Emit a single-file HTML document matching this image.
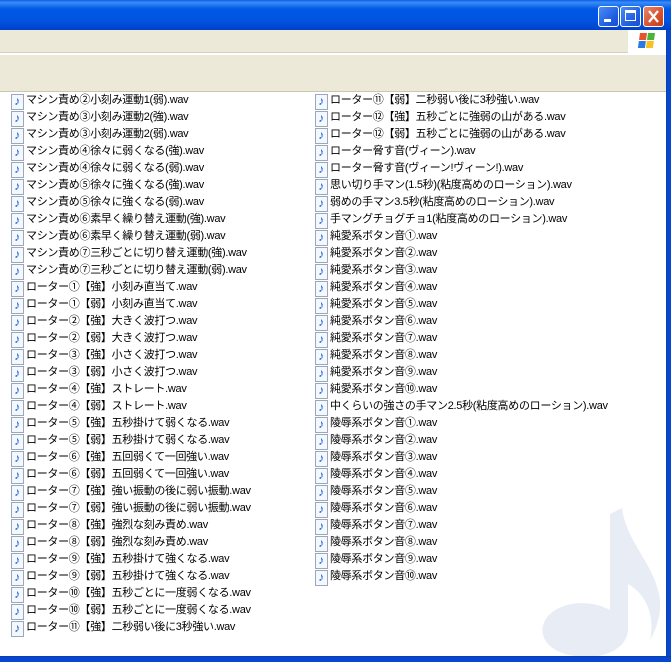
<!DOCTYPE html>
<html><head><meta charset="utf-8"><style>
*{margin:0;padding:0;box-sizing:border-box}
body{width:671px;height:662px;overflow:hidden;background:#fff;position:relative;font-family:"Liberation Sans","Noto Sans CJK JP",sans-serif;font-size:11px;color:#000}
#title{position:absolute;left:0;top:0;width:671px;height:30px;background:linear-gradient(#0a5fe8 0%,#3a8cf6 8%,#0058e6 30%,#0053e0 70%,#0040c8 100%)}
.btn{position:absolute;top:6px;width:21px;height:21px;border:1px solid #fff;border-radius:3px;background:linear-gradient(135deg,#4a8cf8,#1c5ae0 70%,#1b4fc9)}
#close{background:linear-gradient(135deg,#e8866a,#d6512e 60%,#c53c1c)}
#menu{position:absolute;left:0;top:30px;width:666px;height:23px;background:#ece9d8;border-bottom:1px solid #d6d2c2}
#logo{position:absolute;left:628px;top:30px;width:38px;height:23px;background:#fff}
#tool{position:absolute;left:0;top:54px;width:666px;height:38px;background:#ece9d8;border-top:1px solid #fff;border-bottom:1px solid #c9c6b6}
#rb{position:absolute;left:666px;top:30px;width:5px;height:632px;background:#0848d0;border-left:1px solid #0a3fb0}
#bb{position:absolute;left:0;top:656px;width:671px;height:6px;background:#0848d0;border-top:1px solid #0a3fb0}
.col{position:absolute;top:92px}
.r{height:17px;line-height:17px;white-space:nowrap;position:relative;padding-left:15px;letter-spacing:-0.3px}
.r:before{content:"";position:absolute;left:0;top:2px;width:11px;height:14px;background:#f4f7fc;border:1px solid #9aa8bc}
.r:after{content:"♪";position:absolute;left:1px;top:1px;width:10px;text-align:center;font-size:12px;font-weight:bold;color:#1a5fd0;line-height:16px}
</style></head><body>
<div id="title"></div>
<div class="btn" style="left:598px"><div style="position:absolute;left:5px;top:12px;width:7px;height:3px;background:#fff"></div></div>
<div class="btn" style="left:620px"><div style="position:absolute;left:4px;top:3px;width:11px;height:11px;border:1px solid #fff;border-top:3px solid #fff"></div></div>
<div class="btn" id="close" style="left:643px"><svg width="19" height="19" style="position:absolute;left:0;top:0"><path d="M5 4L14 15M14 4L5 15" stroke="#fff" stroke-width="2.2"/></svg></div>
<div id="menu"></div>
<div id="logo"><svg width="38" height="23"><g transform="translate(12,3) skewX(-8)"><rect x="0" y="0" width="7" height="7" fill="#e8542a"/><rect x="8" y="0" width="7" height="7" fill="#4ab33a"/><rect x="0" y="8" width="7" height="7" fill="#2a7ae0"/><rect x="8" y="8" width="7" height="7" fill="#f8c020"/></g></svg></div>
<div id="tool"></div>
<svg style="position:absolute;left:530px;top:500px" width="136" height="156"><path d="M92 8 C96 40 120 60 128 90 C134 110 126 130 120 140 C126 110 112 92 98 84 L98 128 C98 150 72 160 45 156 C15 152 5 132 18 116 C33 100 62 100 80 110 L80 14 Z" fill="#e8ecf4"/></svg>
<div class="col" style="left:11px">
<div class="r">マシン責め②小刻み運動1(弱).wav</div>
<div class="r">マシン責め③小刻み運動2(強).wav</div>
<div class="r">マシン責め③小刻み運動2(弱).wav</div>
<div class="r">マシン責め④徐々に弱くなる(強).wav</div>
<div class="r">マシン責め④徐々に弱くなる(弱).wav</div>
<div class="r">マシン責め⑤徐々に強くなる(強).wav</div>
<div class="r">マシン責め⑤徐々に強くなる(弱).wav</div>
<div class="r">マシン責め⑥素早く繰り替え運動(強).wav</div>
<div class="r">マシン責め⑥素早く繰り替え運動(弱).wav</div>
<div class="r">マシン責め⑦三秒ごとに切り替え運動(強).wav</div>
<div class="r">マシン責め⑦三秒ごとに切り替え運動(弱).wav</div>
<div class="r">ローター①【強】小刻み直当て.wav</div>
<div class="r">ローター①【弱】小刻み直当て.wav</div>
<div class="r">ローター②【強】大きく波打つ.wav</div>
<div class="r">ローター②【弱】大きく波打つ.wav</div>
<div class="r">ローター③【強】小さく波打つ.wav</div>
<div class="r">ローター③【弱】小さく波打つ.wav</div>
<div class="r">ローター④【強】ストレート.wav</div>
<div class="r">ローター④【弱】ストレート.wav</div>
<div class="r">ローター⑤【強】五秒掛けて弱くなる.wav</div>
<div class="r">ローター⑤【弱】五秒掛けて弱くなる.wav</div>
<div class="r">ローター⑥【強】五回弱くて一回強い.wav</div>
<div class="r">ローター⑥【弱】五回弱くて一回強い.wav</div>
<div class="r">ローター⑦【強】強い振動の後に弱い振動.wav</div>
<div class="r">ローター⑦【弱】強い振動の後に弱い振動.wav</div>
<div class="r">ローター⑧【強】強烈な刻み責め.wav</div>
<div class="r">ローター⑧【弱】強烈な刻み責め.wav</div>
<div class="r">ローター⑨【強】五秒掛けて強くなる.wav</div>
<div class="r">ローター⑨【弱】五秒掛けて強くなる.wav</div>
<div class="r">ローター⑩【強】五秒ごとに一度弱くなる.wav</div>
<div class="r">ローター⑩【弱】五秒ごとに一度弱くなる.wav</div>
<div class="r">ローター⑪【強】二秒弱い後に3秒強い.wav</div>
</div>
<div class="col" style="left:315px">
<div class="r">ローター⑪【弱】二秒弱い後に3秒強い.wav</div>
<div class="r">ローター⑫【強】五秒ごとに強弱の山がある.wav</div>
<div class="r">ローター⑫【弱】五秒ごとに強弱の山がある.wav</div>
<div class="r">ローター脅す音(ヴィーン).wav</div>
<div class="r">ローター脅す音(ヴィーン!ヴィーン!).wav</div>
<div class="r">思い切り手マン(1.5秒)(粘度高めのローション).wav</div>
<div class="r">弱めの手マン3.5秒(粘度高めのローション).wav</div>
<div class="r">手マングチョグチョ1(粘度高めのローション).wav</div>
<div class="r">純愛系ボタン音①.wav</div>
<div class="r">純愛系ボタン音②.wav</div>
<div class="r">純愛系ボタン音③.wav</div>
<div class="r">純愛系ボタン音④.wav</div>
<div class="r">純愛系ボタン音⑤.wav</div>
<div class="r">純愛系ボタン音⑥.wav</div>
<div class="r">純愛系ボタン音⑦.wav</div>
<div class="r">純愛系ボタン音⑧.wav</div>
<div class="r">純愛系ボタン音⑨.wav</div>
<div class="r">純愛系ボタン音⑩.wav</div>
<div class="r">中くらいの強さの手マン2.5秒(粘度高めのローション).wav</div>
<div class="r">陵辱系ボタン音①.wav</div>
<div class="r">陵辱系ボタン音②.wav</div>
<div class="r">陵辱系ボタン音③.wav</div>
<div class="r">陵辱系ボタン音④.wav</div>
<div class="r">陵辱系ボタン音⑤.wav</div>
<div class="r">陵辱系ボタン音⑥.wav</div>
<div class="r">陵辱系ボタン音⑦.wav</div>
<div class="r">陵辱系ボタン音⑧.wav</div>
<div class="r">陵辱系ボタン音⑨.wav</div>
<div class="r">陵辱系ボタン音⑩.wav</div>
</div>
<div id="rb"></div>
<div id="bb"></div>
</body></html>
